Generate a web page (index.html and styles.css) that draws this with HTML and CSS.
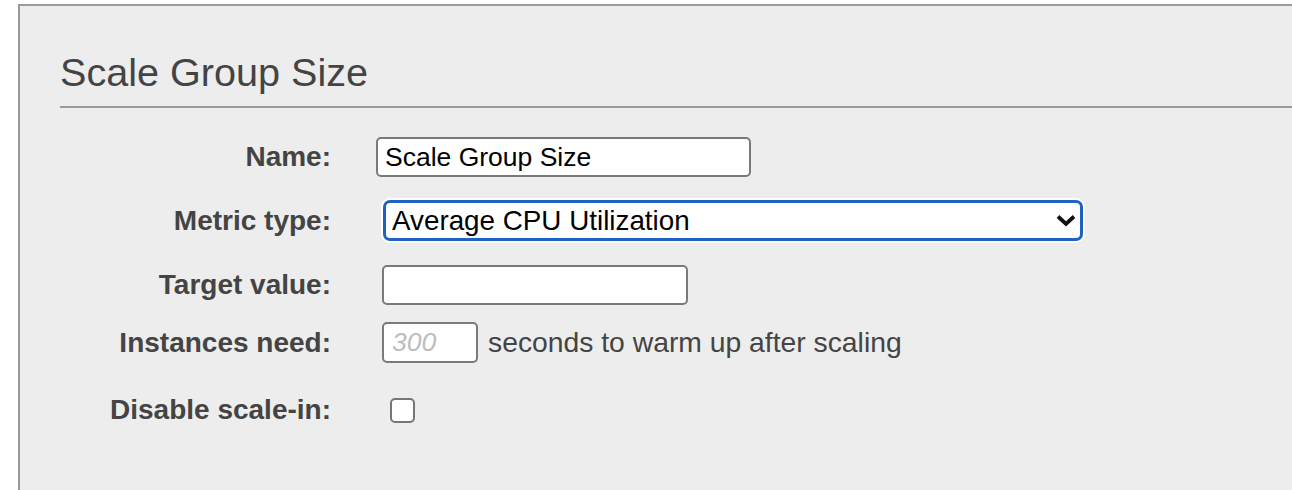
FILE: index.html
```html
<!DOCTYPE html>
<html>
<head>
<meta charset="utf-8">
<link rel="stylesheet" href="styles.css">
</head>
<body>
<div class="panel">
  <h1 class="title">Scale Group Size</h1>
  <form class="form">
    <div class="row row-name">
      <label class="label">Name:</label>
      <input class="input input-name" type="text" value="Scale Group Size">
    </div>
    <div class="row row-metric">
      <label class="label">Metric type:</label>
      <div class="select-wrap">
        <select class="select">
          <option>Average CPU Utilization</option>
        </select>
        <svg class="chev" width="20" height="13" viewBox="0 0 20 13"><path d="M2 2.5 L10 10 L18 2.5" fill="none" stroke="#111" stroke-width="3.8"/></svg>
      </div>
    </div>
    <div class="row row-target">
      <label class="label">Target value:</label>
      <input class="input input-target" type="text">
    </div>
    <div class="row row-inst">
      <label class="label">Instances need:</label>
      <input class="input input-inst" type="text" placeholder="300">
      <span class="after">seconds to warm up after scaling</span>
    </div>
    <div class="row row-disable">
      <label class="label">Disable scale-in:</label>
      <span class="check"></span>
    </div>
  </form>
</div>
</body>
</html>
```
FILE: styles.css
```css
html, body {
  margin: 0;
  padding: 0;
  background: #ffffff;
  overflow: hidden;
  height: 490px;
}
.panel {
  margin: 4px 0 0 18px;
  height: 500px;
  background: #ededed;
  border-top: 2px solid #9a9a9a;
  border-left: 2px solid #9a9a9a;
  padding-left: 40px;
  box-sizing: border-box;
  font-family: "Liberation Sans", Arial, sans-serif;
  color: #444;
}
.title {
  margin: 46px 0 0 0;
  padding: 0 0 14px 0;
  font-size: 39.6px;
  line-height: 40px;
  font-weight: normal;
  color: #444;
  border-bottom: 2px solid #9a9a9a;
}
.form {
  margin-top: 29px;
}
.row {
  display: flex;
  align-items: center;
}
.label {
  width: 271px;
  flex-shrink: 0;
  margin-right: 45px;
  text-align: right;
  font-weight: bold;
  font-size: 28px;
  color: #444;
}
.input {
  box-sizing: border-box;
  border: 2px solid #7a7a7a;
  border-radius: 5px;
  background: #fff;
  font-family: "Liberation Sans", Arial, sans-serif;
  font-size: 26.5px;
  color: #000;
  outline: none;
  margin: 0;
}
.input-name {
  width: 375px;
  height: 40px;
  padding: 0 0 0 7px;
}
.row-metric { margin-top: 23px; }
.select-wrap {
  position: relative;
  margin-left: 7px;
  width: 700px;
  height: 41px;
}
.select {
  appearance: none;
  -webkit-appearance: none;
  box-sizing: border-box;
  width: 700px;
  height: 41px;
  margin: 0;
  border: 3px solid #1f62c6;
  border-radius: 7px;
  box-shadow: 0 0 0 2px #fff;
  background: #fff;
  padding: 0 0 0 6px;
  font-family: "Liberation Sans", Arial, sans-serif;
  font-size: 27.8px;
  color: #000;
  outline: none;
}
.chev {
  position: absolute;
  right: 7px;
  top: 14px;
}
.row-target { margin-top: 24px; }
.input-target {
  width: 306px;
  height: 40px;
  margin-left: 6px;
}
.row-inst { margin-top: 17px; }
.input-inst {
  width: 96px;
  height: 41px;
  margin-left: 6px;
  padding: 0 0 0 8px;
}
.input-inst::placeholder {
  color: #bdbdbd;
  font-style: italic;
}
.after {
  margin-left: 10px;
  font-size: 28.3px;
  color: #444;
}
.row-disable { margin-top: 31px; }
.check {
  display: block;
  box-sizing: border-box;
  width: 25px;
  height: 25px;
  margin-left: 14px;
  border: 2px solid #767676;
  border-radius: 5px;
  background: #fff;
}
```
